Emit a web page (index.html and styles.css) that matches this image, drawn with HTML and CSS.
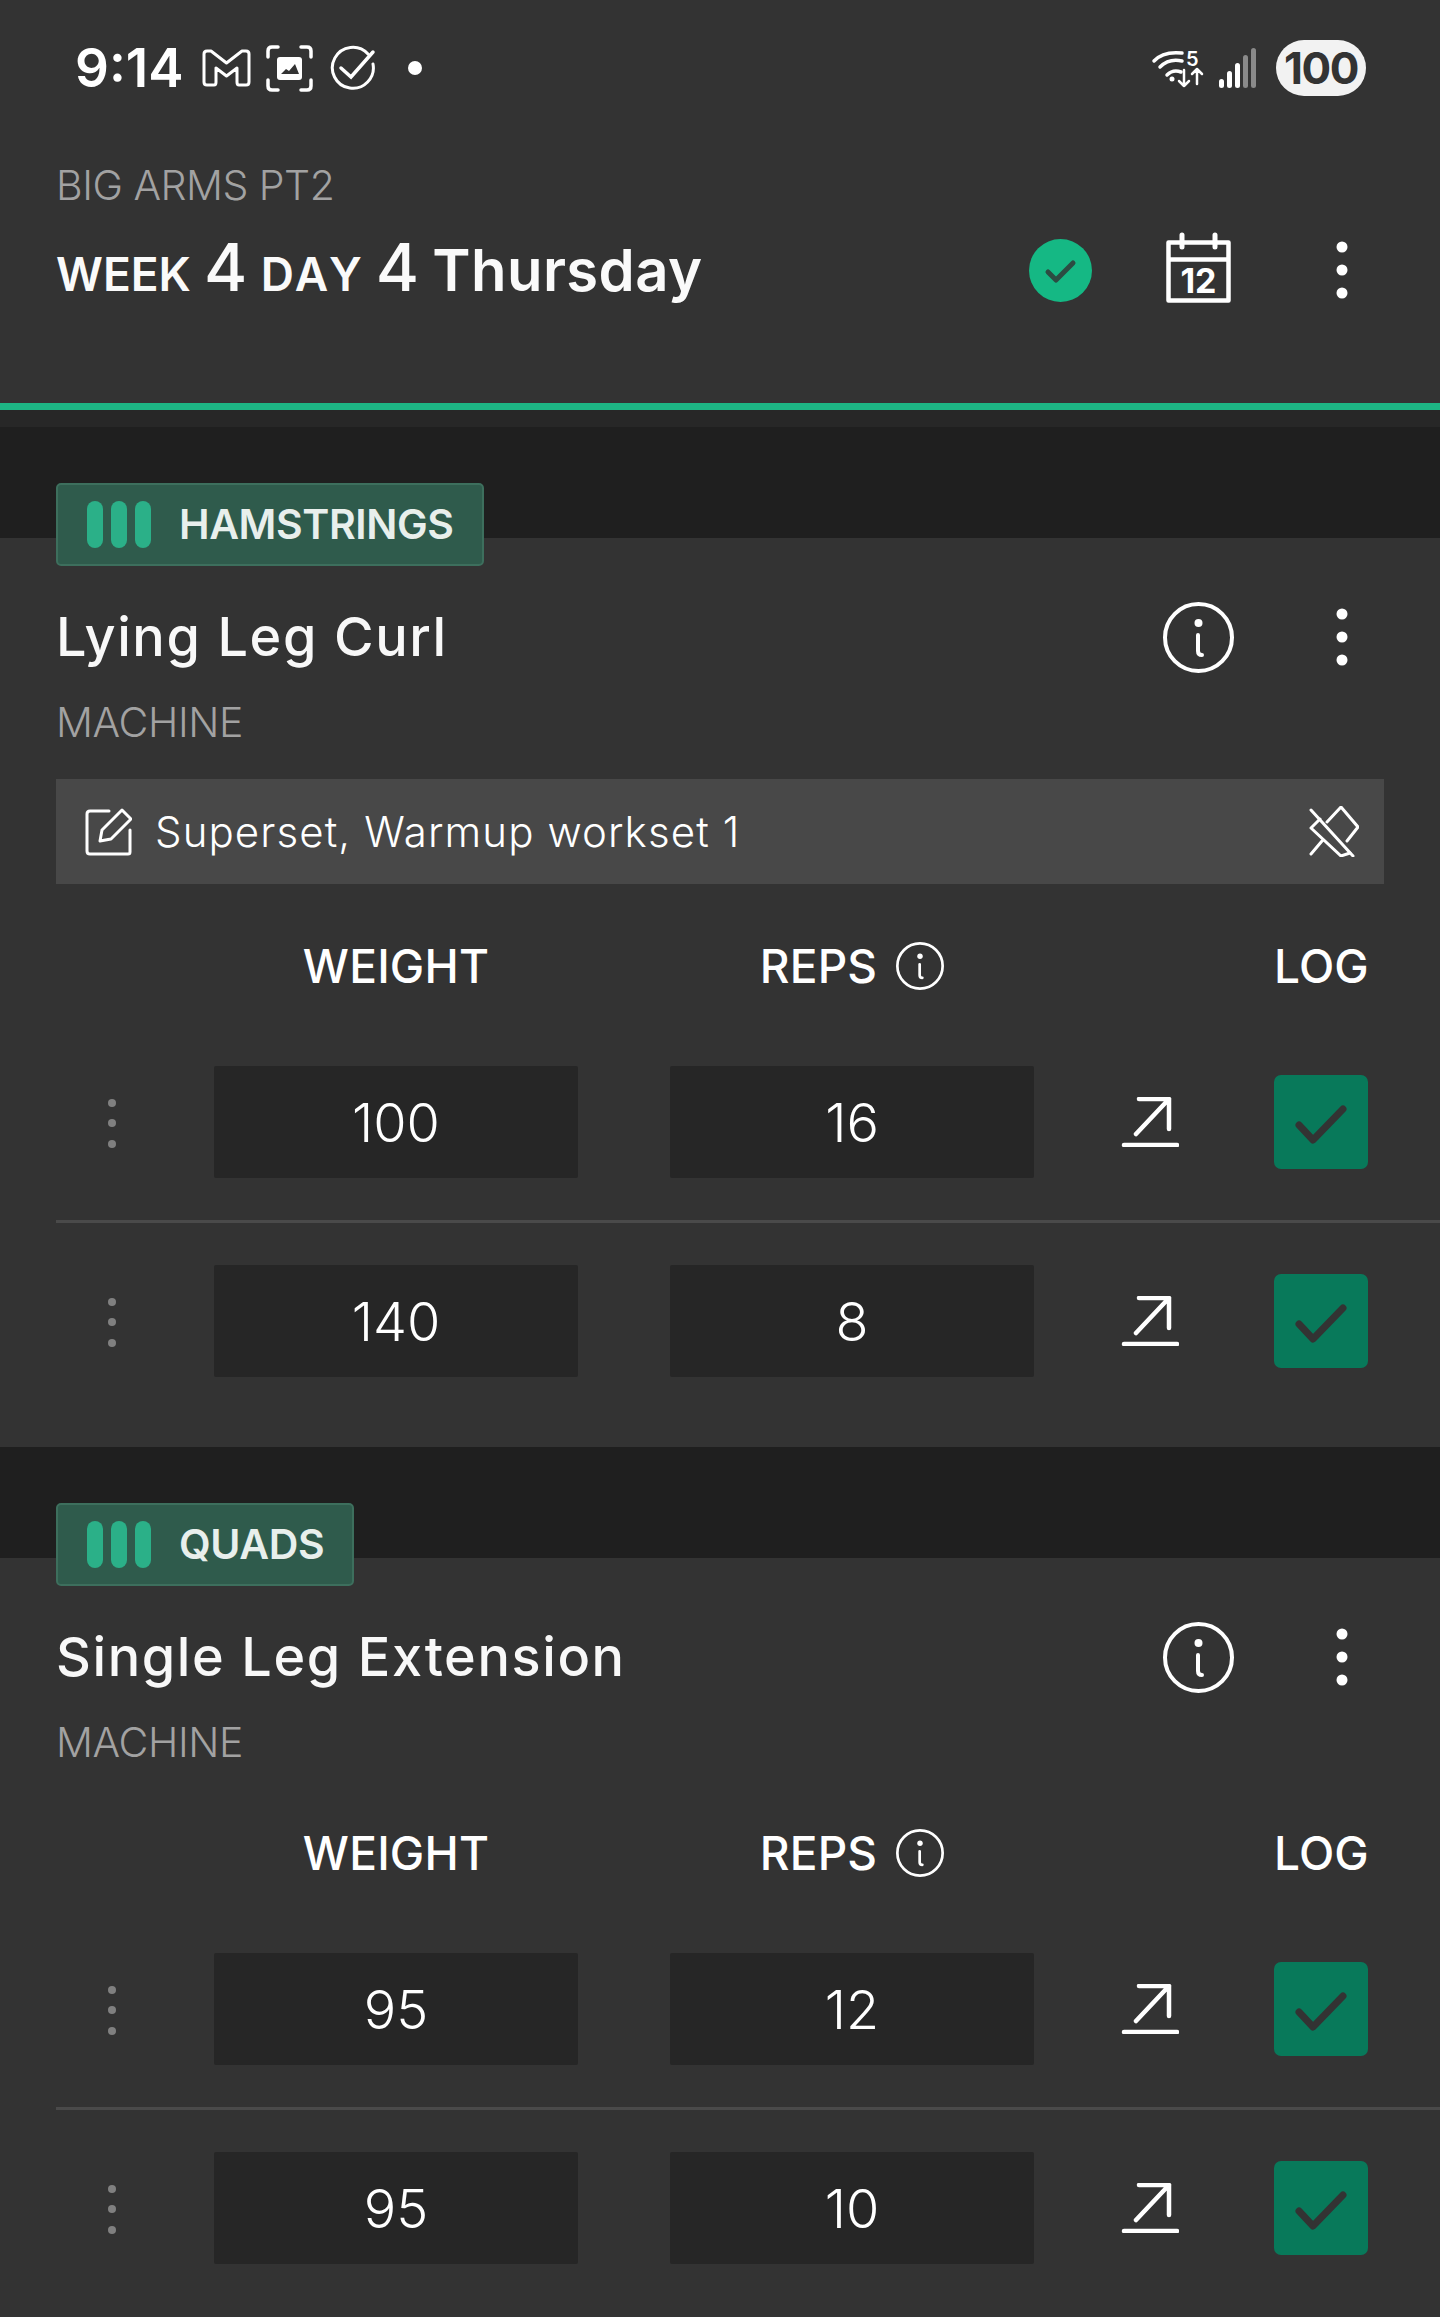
FILE: index.html
```html
<!DOCTYPE html>
<html lang="en">

<head>
    <meta charset="UTF-8">
    <meta name="viewport" content="width=device-width, initial-scale=1.0">
    <title>Workout log</title>
    <link rel="stylesheet" href="styles.css">
</head>

<body>
    <!-- icons used more than once -->
    <svg class="sprite" aria-hidden="true">
        <symbol id="icon-info" viewBox="0 0 71 71">
            <circle cx="35.5" cy="35.5" r="33.5" fill="none" stroke="currentColor" stroke-width="4" />
            <circle cx="35.5" cy="21" r="4" fill="currentColor" />
            <path d="M35 33V49q0 4 4 4" fill="none" stroke="currentColor" stroke-width="4" stroke-linecap="round" />
        </symbol>
        <symbol id="icon-more" viewBox="0 0 12 58">
            <circle cx="6" cy="6" r="5.5" fill="currentColor" />
            <circle cx="6" cy="29" r="5.5" fill="currentColor" />
            <circle cx="6" cy="52" r="5.5" fill="currentColor" />
        </symbol>
        <symbol id="icon-send" viewBox="0 0 58 50">
            <path d="M15 37L48 2M18 2H48V32M3 48H56" fill="none" stroke="currentColor" stroke-width="4.5" stroke-linecap="round" stroke-linejoin="round" />
        </symbol>
        <symbol id="icon-tick" viewBox="0 0 94 94">
            <path d="M25 50L39 65L69 34" fill="none" stroke="currentColor" stroke-width="7" stroke-linecap="round" stroke-linejoin="round" />
        </symbol>
    </svg>

    <header class="top">
        <div class="status">
            <span class="clock">9:14</span>
            <svg class="ic-gmail" viewBox="0 0 49 38">
                <path d="M2 5Q2 2 5 2H9L24.5 14L40 2H44Q47 2 47 5V33Q47 36 44 36H37Q35 36 35 33V19L24.5 27L14 19V33Q14 36 12 36H5Q2 36 2 33Z" fill="none" stroke="#fff" stroke-width="3" stroke-linejoin="round" />
            </svg>
            <svg class="ic-shot" viewBox="0 0 47 47">
                <path d="M2 12V6Q2 2 6 2H12M35 2H41Q45 2 45 6V12M45 35V41Q45 45 41 45H35M12 45H6Q2 45 2 41V35" fill="none" stroke="#fff" stroke-width="3.5" stroke-linecap="round" />
                <rect x="11" y="12" width="25" height="23" rx="3" fill="#fff" />
                <path d="M15 29L20 24L23 26L29 19L33 29Z" fill="#333" />
            </svg>
            <svg class="ic-done" viewBox="0 0 46 46">
                <path d="M38 9A20.5 20.5 0 1 0 43 19" fill="none" stroke="#fff" stroke-width="3" stroke-linecap="round" />
                <path d="M11 23L21 32L43 7" fill="none" stroke="#fff" stroke-width="3.5" stroke-linecap="round" />
            </svg>
            <span class="status-dot"></span>

            <div class="status-right">
                <svg class="ic-wifi" viewBox="0 -4 54 46">
                    <path d="M3 12Q12 2 31 4M9 18Q18 9 31 12M16 26Q22 20 30 23" fill="none" stroke="#fff" stroke-width="3.5" stroke-linecap="round" />
                    <circle cx="21" cy="30" r="2.5" fill="#fff" />
                    <text x="35" y="17" class="wifi-five">5</text>
                    <path d="M33 21V37M28 32L33 37L38 32M46 35V20M41 25L46 20L51 25" fill="none" stroke="#fff" stroke-width="2.5" stroke-linecap="round" stroke-linejoin="round" />
                </svg>
                <svg class="ic-signal" viewBox="0 0 37 40">
                    <rect x="0" y="31" width="5" height="9" rx="2.5" fill="#fff" />
                    <rect x="8" y="23" width="5" height="17" rx="2.5" fill="#fff" />
                    <rect x="16" y="15" width="5" height="25" rx="2.5" fill="#fff" />
                    <rect x="24" y="7" width="5" height="33" rx="2.5" fill="#8a8a8a" />
                    <rect x="32" y="0" width="5" height="40" rx="2.5" fill="#8a8a8a" />
                </svg>
                <span class="battery">100</span>
            </div>
        </div>

        <div class="plan-name">BIG ARMS PT2</div>
        <div class="day-row">
            <h1 class="day-title"><span class="small-caps week">WEEK</span> <span class="big-num">4</span> <span class="small-caps">DAY</span> <span class="big-num">4</span> Thursday</h1>
            <svg class="ic-complete" viewBox="0 0 63 63">
                <circle cx="31.5" cy="31.5" r="31.5" fill="#15b884" />
                <path d="M19 33L27 41L44 24" fill="none" stroke="#2c4c42" stroke-width="5" stroke-linecap="round" stroke-linejoin="round" />
            </svg>
            <svg class="ic-cal" viewBox="0 0 65 71">
                <path d="M2.5 10.5H62.5V68.5H2.5ZM2.5 27.5H62.5" fill="none" stroke="#fff" stroke-width="4.5" stroke-linejoin="round" />
                <path d="M16 3V15M49 3V15" stroke="#fff" stroke-width="5" stroke-linecap="round" />
                <text x="32.5" y="61" class="cal-num">12</text>
            </svg>
            <svg class="ic-more"><use href="#icon-more" /></svg>
        </div>
    </header>
    <div class="progress-line"></div>
    <div class="progress-shade"></div>
    <div class="gap gap-first"></div>

    <section class="card">
        <div class="muscle">
            <span class="bars"><i></i><i></i><i></i></span>
            <span class="muscle-name">HAMSTRINGS</span>
        </div>
        <div class="ex-row">
            <h2 class="ex-name">Lying Leg Curl</h2>
            <svg class="ic-info"><use href="#icon-info" /></svg>
            <svg class="ic-more"><use href="#icon-more" /></svg>
        </div>
        <div class="ex-type">MACHINE</div>
        <div class="note">
            <svg class="ic-pencil" viewBox="0 0 47 48">
                <path d="M24 3H5Q2 3 2 6V43Q2 46 5 46H43Q45 46 45 44V22" fill="none" stroke="#fff" stroke-width="3" stroke-linecap="round" stroke-linejoin="round" />
                <path d="M15 33L17 22L37 2L46 11L26 31Z" fill="none" stroke="#fff" stroke-width="3" stroke-linejoin="round" />
            </svg>
            <span class="note-text">Superset, Warmup workset 1</span>
            <svg class="ic-unpin" viewBox="0 0 50 51">
                <path d="M2 4L44 50" fill="none" stroke="#fff" stroke-width="3" stroke-linecap="round" />
                <path d="M18 16L32 1L49 21L38 35M11 13L2 22L32 50L41 47M2 48L13 35" fill="none" stroke="#fff" stroke-width="3" stroke-linecap="round" stroke-linejoin="round" />
            </svg>
        </div>
        <div class="sets-head">
            <span class="col-drag"></span>
            <span class="col-weight">WEIGHT</span>
            <span class="col-reps">REPS <svg class="ic-info-small"><use href="#icon-info" /></svg></span>
            <span class="col-send"></span>
            <span class="col-log">LOG</span>
        </div>
        <div class="set-row">
            <span class="col-drag"><i class="grip"></i></span>
            <span class="col-weight field">100</span>
            <span class="col-reps field">16</span>
            <span class="col-send"><svg class="ic-send"><use href="#icon-send" /></svg></span>
            <span class="col-log tick"><svg class="ic-tick"><use href="#icon-tick" /></svg></span>
        </div>
        <div class="set-row">
            <span class="col-drag"><i class="grip"></i></span>
            <span class="col-weight field">140</span>
            <span class="col-reps field">8</span>
            <span class="col-send"><svg class="ic-send"><use href="#icon-send" /></svg></span>
            <span class="col-log tick"><svg class="ic-tick"><use href="#icon-tick" /></svg></span>
        </div>
    </section>

    <div class="gap"></div>

    <section class="card">
        <div class="muscle">
            <span class="bars"><i></i><i></i><i></i></span>
            <span class="muscle-name">QUADS</span>
        </div>
        <div class="ex-row">
            <h2 class="ex-name">Single Leg Extension</h2>
            <svg class="ic-info"><use href="#icon-info" /></svg>
            <svg class="ic-more"><use href="#icon-more" /></svg>
        </div>
        <div class="ex-type">MACHINE</div>
        <div class="sets-head">
            <span class="col-drag"></span>
            <span class="col-weight">WEIGHT</span>
            <span class="col-reps">REPS <svg class="ic-info-small"><use href="#icon-info" /></svg></span>
            <span class="col-send"></span>
            <span class="col-log">LOG</span>
        </div>
        <div class="set-row">
            <span class="col-drag"><i class="grip"></i></span>
            <span class="col-weight field">95</span>
            <span class="col-reps field">12</span>
            <span class="col-send"><svg class="ic-send"><use href="#icon-send" /></svg></span>
            <span class="col-log tick"><svg class="ic-tick"><use href="#icon-tick" /></svg></span>
        </div>
        <div class="set-row">
            <span class="col-drag"><i class="grip"></i></span>
            <span class="col-weight field">95</span>
            <span class="col-reps field">10</span>
            <span class="col-send"><svg class="ic-send"><use href="#icon-send" /></svg></span>
            <span class="col-log tick"><svg class="ic-tick"><use href="#icon-tick" /></svg></span>
        </div>
    </section>
</body>

</html>
```

FILE: styles.css
```css
/* page */

html,
body {
    margin: 0;
    padding: 0;
    height: 2317px;
    overflow: hidden;
    background: #333;
    color: #fff;
    font-family: "Inter", "Liberation Sans", sans-serif;
}

.sprite {
    display: none;
}

/* top block with the status bar and the day title */

.top {
    height: 403px;
    padding-left: 56px;
    box-sizing: border-box;
    background: #333;
}

.status {
    display: flex;
    align-items: center;
    height: 136px;
    padding-left: 19px;
}

.clock {
    width: 127px;
    font-size: 53px;
    font-weight: 600;
    color: #fff;
}

.ic-gmail {
    width: 49px;
    height: 38px;
}

.ic-shot {
    width: 47px;
    height: 47px;
    margin-left: 15px;
}

.ic-done {
    width: 46px;
    height: 46px;
    margin-left: 17px;
}

.status-dot {
    width: 14px;
    height: 14px;
    margin-left: 32px;
    border-radius: 50%;
    background: #fff;
}

.status-right {
    display: flex;
    align-items: center;
    margin-left: auto;
    margin-right: 74px;
}

.ic-wifi {
    width: 54px;
    height: 46px;
}

.wifi-five {
    font-size: 20px;
    font-weight: 600;
    fill: #fff;
}

.ic-signal {
    width: 37px;
    height: 40px;
    margin-left: 14px;
}

.battery {
    width: 90px;
    height: 56px;
    margin-left: 20px;
    border-radius: 28px;
    background: #f2f2f2;
    color: #333;
    font-size: 44px;
    font-weight: 700;
    line-height: 56px;
    text-align: center;
    letter-spacing: -1.5px;
}

.plan-name {
    margin-top: 24px;
    height: 50px;
    font-size: 41px;
    font-weight: 300;
    line-height: 50px;
    letter-spacing: -0.5px;
    color: #a2a2a2;
}

.day-row {
    display: flex;
    align-items: center;
    height: 90px;
    margin-top: 15px;
}

.day-title {
    flex: 1;
    margin: -6px 0 0;
    font-size: 58px;
    font-weight: 600;
    letter-spacing: 0.4px;
    word-spacing: -2px;
    color: #fafafa;
    white-space: nowrap;
}

.small-caps {
    font-size: 46px;
    letter-spacing: 0.8px;
    font-kerning: none;
}

.week {
    letter-spacing: 0;
}

.big-num {
    font-size: 66px;
    font-weight: 500;
}

.ic-complete {
    width: 63px;
    height: 63px;
}

.ic-cal {
    width: 65px;
    height: 71px;
    margin-left: 74px;
    margin-top: -6px;
}

.cal-num {
    font-size: 34px;
    font-weight: 700;
    fill: #fff;
    text-anchor: middle;
}

.ic-more {
    width: 12px;
    height: 58px;
    margin-left: 105px;
    margin-right: 92px;
    color: #fff;
}

.progress-line {
    height: 7px;
    background: #1db584;
}

.progress-shade {
    height: 17px;
    background: #272727;
}

/* dark space between the cards */

.gap {
    height: 111px;
    background: #1f1f1f;
}

.card {
    padding: 0 0 28px 56px;
    background: #333;
}

.muscle {
    display: inline-flex;
    align-items: center;
    box-sizing: border-box;
    height: 83px;
    margin-top: -55px;
    padding: 0 28px 0 29px;
    border: 2px solid #3d6f5d;
    border-radius: 5px;
    background: #2f5b4c;
    vertical-align: top;
}

.bars {
    display: flex;
    gap: 8px;
}

.bars i {
    width: 16px;
    height: 47px;
    border-radius: 8px;
    background: #2bb088;
}

.muscle-name {
    margin-left: 28px;
    margin-top: -2px;
    font-size: 41px;
    font-weight: 600;
    letter-spacing: -0.4px;
    color: #e8efec;
}

.ex-row {
    display: flex;
    align-items: center;
    height: 80px;
    margin-top: 31px;
}

.ex-name {
    flex: 1;
    margin: -2px 0 0;
    font-size: 54px;
    font-weight: 500;
    letter-spacing: 1.6px;
    color: #f8f8f8;
    white-space: nowrap;
}

.ic-info {
    width: 71px;
    height: 71px;
    color: #fff;
}

.ex-row .ic-more {
    margin-left: 102px;
}

.ex-type {
    height: 50px;
    margin-top: 20px;
    margin-bottom: 28px;
    font-size: 41px;
    font-weight: 300;
    line-height: 50px;
    letter-spacing: -0.4px;
    color: #a2a2a2;
}

/* note under the exercise */

.note {
    display: flex;
    align-items: center;
    height: 105px;
    margin: 32px 56px 24px 0;
    padding: 0 25px 0 29px;
    background: #484848;
}

.ic-pencil {
    width: 47px;
    height: 48px;
}

.note-text {
    flex: 1;
    margin-left: 23px;
    font-size: 42px;
    font-weight: 300;
    letter-spacing: 1.1px;
}

.ic-unpin {
    width: 50px;
    height: 51px;
}

/* sets table */

.sets-head,
.set-row {
    display: flex;
    align-items: center;
}

.sets-head {
    height: 116px;
    font-size: 46px;
    font-weight: 500;
    letter-spacing: 0.2px;
}

.set-row {
    padding: 42px 0;
    border-bottom: 3px solid #4a4a4a;
}

.set-row:last-child {
    border-bottom: 0;
}

.col-drag {
    display: flex;
    justify-content: center;
    width: 112px;
    margin-right: 46px;
}

.col-weight,
.col-reps {
    display: flex;
    align-items: center;
    justify-content: center;
    width: 364px;
}

.col-reps {
    margin-left: 92px;
}

.col-send {
    width: 57px;
    margin-left: 87px;
}

.col-log {
    width: 94px;
    margin-left: 96px;
    white-space: nowrap;
}

.ic-info-small {
    width: 48px;
    height: 48px;
    margin-left: 19px;
    color: #fff;
}

.field {
    height: 112px;
    border-radius: 2px;
    background: #262626;
    font-size: 54px;
    font-weight: 300;
}

.grip {
    display: block;
    width: 8px;
    height: 8px;
    border-radius: 50%;
    background: #808080;
    box-shadow: 0 20px 0 #808080, 0 41px 0 #808080;
    margin-top: -19px;
    margin-bottom: 19px;
    margin-left: 0;
}

.ic-send {
    display: block;
    width: 58px;
    height: 50px;
    color: #fff;
}

.tick {
    height: 94px;
    border-radius: 7px;
    background: #08795a;
}

.ic-tick {
    display: block;
    width: 94px;
    height: 94px;
    color: #333;
}
```
